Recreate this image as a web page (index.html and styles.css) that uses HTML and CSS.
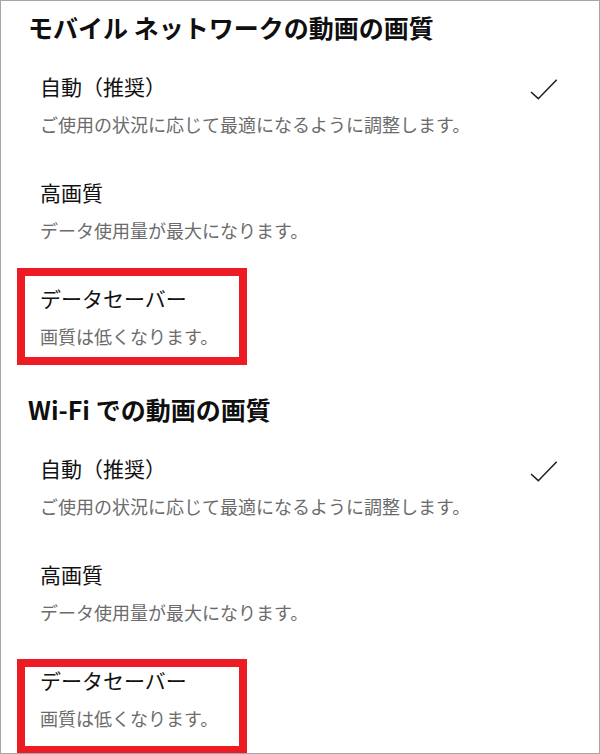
FILE: index.html
```html
<!DOCTYPE html>
<html lang="ja">
<head>
<meta charset="utf-8">
<link rel="stylesheet" href="styles.css">
</head>
<body>
<div class="page">
  <section class="section">
    <h2 class="section-title">モバイル ネットワークの動画の画質</h2>
    <ul class="options">
      <li class="option">
        <div class="option-row">
          <span class="option-title">自動（推奨）</span>
          <svg class="check" width="28" height="22" viewBox="0 0 28 22"><polyline points="1,13 8.3,19.7 26.7,0.7" fill="none" stroke="#222" stroke-width="1.6"/></svg>
        </div>
        <div class="option-desc">ご使用の状況に応じて最適になるように調整します。</div>
      </li>
      <li class="option">
        <div class="option-row"><span class="option-title">高画質</span></div>
        <div class="option-desc">データ使用量が最大になります。</div>
      </li>
      <li class="option highlight hl-a">
        <div class="option-row"><span class="option-title">データセーバー</span></div>
        <div class="option-desc">画質は低くなります。</div>
      </li>
    </ul>
  </section>
  <section class="section">
    <h2 class="section-title">Wi-Fi での動画の画質</h2>
    <ul class="options">
      <li class="option">
        <div class="option-row">
          <span class="option-title">自動（推奨）</span>
          <svg class="check" width="28" height="22" viewBox="0 0 28 22"><polyline points="1,13 8.3,19.7 26.7,0.7" fill="none" stroke="#222" stroke-width="1.6"/></svg>
        </div>
        <div class="option-desc">ご使用の状況に応じて最適になるように調整します。</div>
      </li>
      <li class="option">
        <div class="option-row"><span class="option-title">高画質</span></div>
        <div class="option-desc">データ使用量が最大になります。</div>
      </li>
      <li class="option highlight hl-b">
        <div class="option-row"><span class="option-title">データセーバー</span></div>
        <div class="option-desc">画質は低くなります。</div>
      </li>
    </ul>
  </section>
</div>
</body>
</html>
```

FILE: styles.css
```css
*, *::before, *::after {
  box-sizing: border-box;
}

html, body {
  margin: 0;
  padding: 0;
  background: #ffffff;
}

body {
  font-family: "Noto Sans CJK JP", "Noto Sans", sans-serif;
  color: #111111;
}

.page {
  width: 600px;
  height: 754px;
  border: 1px solid #a6a6a6;
  padding-top: 9px;
  overflow: hidden;
  display: flex;
  flex-direction: column;
  gap: 43px;
}

.section {
  display: flex;
  flex-direction: column;
}

.section-title {
  margin: 0;
  padding-left: 27px;
  font-size: 25px;
  line-height: 34px;
  font-weight: 700;
  color: #0f0f0f;
}

.options {
  list-style: none;
  margin: 0;
  padding: 27px 0 0 0;
  display: flex;
  flex-direction: column;
  gap: 40px;
}

.option {
  position: relative;
  padding: 0 41px 0 39px;
  display: flex;
  flex-direction: column;
  gap: 10px;
}

.option-row {
  display: flex;
  justify-content: space-between;
  align-items: flex-start;
  height: 30px;
}

.option-title {
  font-size: 21px;
  line-height: 30px;
  color: #111111;
}

.check {
  display: block;
  margin-top: 8px;
}

.option-desc {
  font-size: 18px;
  line-height: 26px;
  color: #6b6b6b;
}

.highlight::after {
  content: "";
  position: absolute;
  left: 16px;
  width: 230px;
  border: 8px solid #ed1c24;
}

.hl-a::after {
  top: -15px;
  bottom: -16px;
}

.hl-b::after {
  top: -6px;
  bottom: -23px;
}
```
